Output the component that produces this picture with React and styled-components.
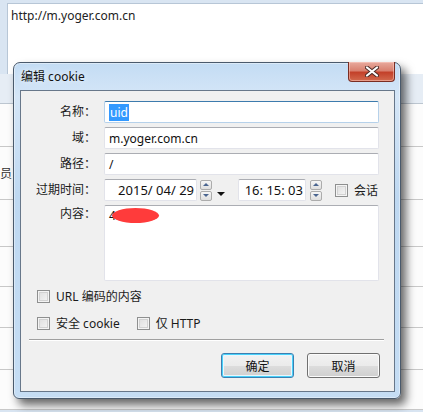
import React from 'react';
import styled, { createGlobalStyle } from 'styled-components';

const GlobalStyle = createGlobalStyle`
  html, body { margin: 0; padding: 0; }
  body {
    width: 423px;
    height: 412px;
    overflow: hidden;
    font-family: "Noto Sans", "Noto Sans CJK SC", sans-serif;
    font-size: 12px;
    color: #1b1b1b;
  }
`;

const FONT = '"Noto Sans", "Noto Sans CJK SC", sans-serif';

// background window behind the dialog
const Page = styled.div`
  position: relative;
  width: 423px;
  height: 412px;
  background: #d9e5f2;
  display: flex;
  flex-direction: column;
  overflow: hidden;
`;

const UrlBox = styled.div`
  margin: 3px 0 0 7px;
  height: 71px;
  background: #fff;
  border-top: 1px solid #b7c6d6;
  border-left: 1px solid #b7c6d6;
  padding: 4px 0 0 3px;
  box-sizing: border-box;
  font-size: 12px;
  line-height: 16px;
  color: #222;
`;

const Strip = styled.div`
  height: 29px;
  background: #e6edf5;
  border-bottom: 1px solid #bcc6d0;
`;

const ListRow = styled.div`
  height: ${p => p.h}px;
  box-sizing: border-box;
  background: #fcfcfc;
  border-bottom: 1px solid #c8c8c8;
  display: flex;
  align-items: center;
  font-size: 12px;
  color: #333;
`;

const RowText = styled.span`
  margin-left: 0;
`;

// the dialog window
const Dialog = styled.div`
  position: absolute;
  left: 13px;
  top: 62px;
  width: 388px;
  height: 337px;
  box-sizing: border-box;
  border: 1px solid #4a5a6c;
  border-radius: 7px 7px 6px 6px;
  background: linear-gradient(180deg, #c3dcf4 0%, #d5e6f7 10%, #bed8f1 40%, #c5ddf4 100%);
  box-shadow: 5px 6px 10px rgba(0, 0, 0, 0.6), 0 0 0 1px rgba(255, 255, 255, 0.4) inset;
  display: flex;
  flex-direction: column;
`;

const TitleBar = styled.div`
  height: 27px;
  display: flex;
  align-items: flex-start;
  justify-content: space-between;
  padding: 0 5px 0 7px;
`;

const Title = styled.div`
  margin-top: 6px;
  font-size: 12px;
  line-height: 16px;
  color: #111;
  text-shadow: 0 0 6px rgba(255, 255, 255, 0.9);
`;

const CloseButton = styled.div`
  margin-top: -1px;
  width: 47px;
  height: 20px;
  box-sizing: border-box;
  border: 1px solid #7a2d22;
  border-top: none;
  border-radius: 0 0 4px 4px;
  background: linear-gradient(180deg, #e8aa9e 0%, #d98170 45%, #c3412a 55%, #d26a4e 100%);
  box-shadow: inset 0 0 0 1px rgba(255, 210, 200, 0.5);
  display: flex;
  align-items: center;
  justify-content: center;
`;

const Client = styled.div`
  margin: 0 5px 0 6px;
  height: 302px;
  box-sizing: border-box;
  border: 1px solid #67778a;
  background: #f0f0f0;
  padding: 10px 15px 13px 0;
  display: flex;
  flex-direction: column;
`;

const Form = styled.div`
  display: grid;
  grid-template-columns: 75px 275px;
  column-gap: 8px;
  row-gap: 4px;
`;

const Label = styled.div`
  text-align: right;
  font-size: 12px;
  line-height: 22px;
  white-space: nowrap;
  color: #1b1b1b;
  align-self: ${p => (p.top ? 'start' : 'center')};
  margin-top: ${p => (p.top ? '-2px' : '0')};
`;

const TextBox = styled.div`
  height: ${p => p.h || 22}px;
  box-sizing: border-box;
  background: #fff;
  border: 1px solid ${p => (p.focused ? '#b6d1ea' : '#e2e3ea')};
  border-top-color: ${p => (p.focused ? '#3d7bad' : '#abadb3')};
  border-radius: 2px;
  padding: ${p => (p.multi ? '1px 4px' : p.spin ? '0 2px 0 0' : '0 4px')};
  display: flex;
  align-items: ${p => (p.multi ? 'flex-start' : 'center')};
  font-size: 12px;
  line-height: 17px;
  white-space: nowrap;
  color: #111;
  width: ${p => (p.w ? `${p.w}px` : 'auto')};
  flex: none;
  justify-content: ${p => (p.spin ? 'flex-end' : 'flex-start')};
`;

const Selected = styled.span`
  background: #3399ff;
  color: #fff;
  padding: 0 1px;
`;

const SpinText = styled.span`
  font-size: 13px;
  white-space: nowrap;
`;

const Redact = styled.span`
  display: inline-block;
  width: 47px;
  height: 15px;
  margin: 1px 0 0 -4px;
  border-radius: 50%;
  background: #ff3b3b;
`;

const DateRow = styled.div`
  display: flex;
  align-items: center;
  height: 22px;
`;

const Spinner = styled.div`
  margin-left: ${p => p.gap}px;
  width: 12px;
  height: 21px;
  display: flex;
  flex-direction: column;
  gap: 1px;
  flex: none;
`;

const SpinHalf = styled.div`
  flex: 1;
  box-sizing: border-box;
  border: 1px solid #acacac;
  border-radius: 2px;
  background: linear-gradient(180deg, #f6f6f6, #dedede);
  display: flex;
  align-items: center;
  justify-content: center;

  &::after {
    content: '';
    border-left: 3px solid transparent;
    border-right: 3px solid transparent;
    ${p => (p.down ? 'border-top: 3px solid #4a6590;' : 'border-bottom: 3px solid #4a6590;')}
  }
`;

const DropArrow = styled.div`
  margin: 7px 13px 0 5px;
  width: 0;
  height: 0;
  border-left: 4px solid transparent;
  border-right: 4px solid transparent;
  border-top: 4px solid #111;
  flex: none;
`;

const Check = styled.span`
  display: inline-block;
  width: 13px;
  height: 13px;
  box-sizing: border-box;
  border: 1px solid #8e8f8f;
  background: linear-gradient(135deg, #dcdcdc, #f7f7f7);
  box-shadow: inset 0 0 0 1px #f4f4f4, inset 0 0 0 2px #d2d2d2;
  flex: none;
`;

const CheckLabel = styled.label`
  display: flex;
  align-items: center;
  gap: 6px;
  height: 13px;
  font-size: 12px;
  line-height: 13px;
  white-space: nowrap;
  margin-left: ${p => p.ml || 0}px;
`;

const Options = styled.div`
  margin: 9px 0 0 16px;
  display: flex;
  flex-direction: column;
  gap: 14px;
`;

const OptionRow = styled.div`
  display: flex;
  align-items: center;
`;

const Separator = styled.div`
  margin: 9px 0 0 8px;
  margin-right: -5px;
  height: 0;
  border-top: 1px solid #a0a0a0;
  border-bottom: 1px solid #ffffff;
`;

const Buttons = styled.div`
  margin-top: 12px;
  display: flex;
  justify-content: flex-end;
  gap: 13px;
  margin-right: -1px;
`;

const Button = styled.div`
  width: 73px;
  height: 25px;
  box-sizing: border-box;
  border: 1px solid ${p => (p.primary ? '#3c7fb1' : '#707070')};
  border-radius: 3px;
  background: linear-gradient(180deg, #f2f2f2 0%, #ebebeb 50%, #dddddd 51%, #cfcfcf 100%);
  box-shadow: ${p => (p.primary ? 'inset 0 0 0 1px #48d1fa, inset 0 0 0 2px #e9f6fd' : 'inset 0 0 0 1px #fbfbfb')};
  display: flex;
  align-items: center;
  justify-content: center;
  font-size: 12px;
  color: #111;
  font-family: ${FONT};
`;

const CloseGlyph = () => (
  <svg width="14" height="11" viewBox="0 0 14 11">
    <path d="M2 1.5 L12 9.5 M12 1.5 L2 9.5" stroke="#4a2a25" strokeWidth="4" strokeLinecap="round" />
    <path d="M2 1.5 L12 9.5 M12 1.5 L2 9.5" stroke="#ffffff" strokeWidth="2.2" strokeLinecap="round" />
  </svg>
);

const rows = [
  { h: 43 },
  { h: 53, text: '员' },
  { h: 47 },
  { h: 40 },
  { h: 41 },
  { h: 42 },
  { h: 40 },
];

const Spin = ({ gap }) => (
  <Spinner gap={gap}>
    <SpinHalf />
    <SpinHalf down />
  </Spinner>
);

export default function App() {
  return (
    <>
      <GlobalStyle />
      <Page>
        <UrlBox>http://m.yoger.com.cn</UrlBox>
        <Strip />
        {rows.map((r, i) => (
          <ListRow key={i} h={r.h}>
            {r.text && <RowText>{r.text}</RowText>}
          </ListRow>
        ))}

        <Dialog>
          <TitleBar>
            <Title>编辑 cookie</Title>
            <CloseButton>
              <CloseGlyph />
            </CloseButton>
          </TitleBar>
          <Client>
            <Form>
              <Label>名称：</Label>
              <TextBox focused>
                <Selected>uid</Selected>
              </TextBox>

              <Label>域：</Label>
              <TextBox>m.yoger.com.cn</TextBox>

              <Label>路径：</Label>
              <TextBox>/</TextBox>

              <Label>过期时间：</Label>
              <DateRow>
                <TextBox spin w={93}>
                  <SpinText>2015/ 04/ 29</SpinText>
                </TextBox>
                <Spin gap={3} />
                <DropArrow />
                <TextBox spin w={68}>
                  <SpinText>16: 15: 03</SpinText>
                </TextBox>
                <Spin gap={4} />
                <CheckLabel ml={13}>
                  <Check />
                  会话
                </CheckLabel>
              </DateRow>

              <Label top>内容：</Label>
              <TextBox multi h={76}>
                4<Redact />
              </TextBox>
            </Form>

            <Options>
              <OptionRow>
                <CheckLabel>
                  <Check />
                  URL 编码的内容
                </CheckLabel>
              </OptionRow>
              <OptionRow>
                <CheckLabel>
                  <Check />
                  安全 cookie
                </CheckLabel>
                <CheckLabel ml={17}>
                  <Check />
                  仅 HTTP
                </CheckLabel>
              </OptionRow>
            </Options>

            <Separator />

            <Buttons>
              <Button primary>确定</Button>
              <Button>取消</Button>
            </Buttons>
          </Client>
        </Dialog>
      </Page>
    </>
  );
}
